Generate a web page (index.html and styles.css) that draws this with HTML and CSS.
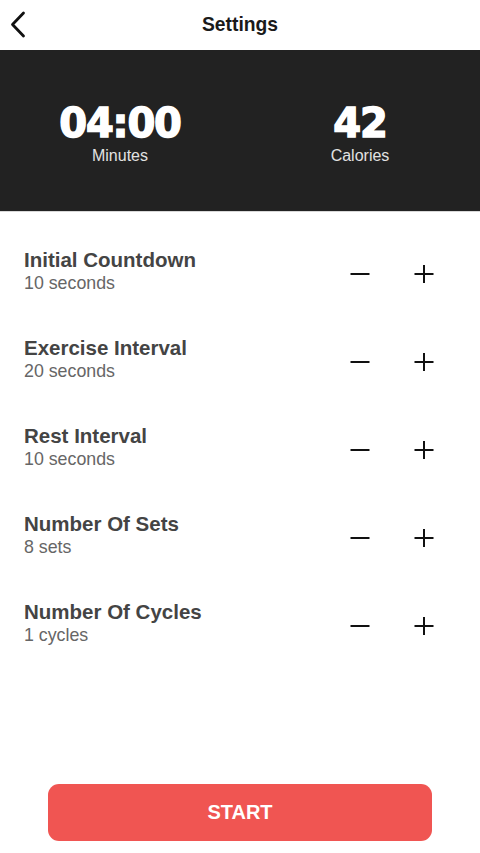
FILE: index.html
```html
<!DOCTYPE html>
<html>
<head>
<meta charset="utf-8">
<link rel="stylesheet" href="styles.css">
</head>
<body>
<div class="app">
  <header class="topbar">
    <svg class="back" width="24" height="28" viewBox="0 0 24 28"><path d="M14.5 2 L3.5 13.5 L14.5 25" fill="none" stroke="#111" stroke-width="2.8" stroke-linecap="round" stroke-linejoin="round"/></svg>
    <h1 class="title">Settings</h1>
  </header>
  <section class="summary">
    <div class="stat">
      <div class="stat-value">04:00</div>
      <div class="stat-label">Minutes</div>
    </div>
    <div class="stat">
      <div class="stat-value">42</div>
      <div class="stat-label">Calories</div>
    </div>
  </section>
  <section class="list">
    <div class="row">
      <div class="info"><div class="name">Initial Countdown</div><div class="value">10 seconds</div></div>
      <div class="controls">
        <svg class="btn" width="20" height="20" viewBox="0 0 20 20"><path d="M0.5 10 H19.5" stroke="#111" stroke-width="2"/></svg>
        <svg class="btn" width="20" height="20" viewBox="0 0 20 20"><path d="M0.5 10 H19.5 M10 1 V19" stroke="#111" stroke-width="2"/></svg>
      </div>
    </div>
    <div class="row">
      <div class="info"><div class="name">Exercise Interval</div><div class="value">20 seconds</div></div>
      <div class="controls">
        <svg class="btn" width="20" height="20" viewBox="0 0 20 20"><path d="M0.5 10 H19.5" stroke="#111" stroke-width="2"/></svg>
        <svg class="btn" width="20" height="20" viewBox="0 0 20 20"><path d="M0.5 10 H19.5 M10 1 V19" stroke="#111" stroke-width="2"/></svg>
      </div>
    </div>
    <div class="row">
      <div class="info"><div class="name">Rest Interval</div><div class="value">10 seconds</div></div>
      <div class="controls">
        <svg class="btn" width="20" height="20" viewBox="0 0 20 20"><path d="M0.5 10 H19.5" stroke="#111" stroke-width="2"/></svg>
        <svg class="btn" width="20" height="20" viewBox="0 0 20 20"><path d="M0.5 10 H19.5 M10 1 V19" stroke="#111" stroke-width="2"/></svg>
      </div>
    </div>
    <div class="row">
      <div class="info"><div class="name">Number Of Sets</div><div class="value">8 sets</div></div>
      <div class="controls">
        <svg class="btn" width="20" height="20" viewBox="0 0 20 20"><path d="M0.5 10 H19.5" stroke="#111" stroke-width="2"/></svg>
        <svg class="btn" width="20" height="20" viewBox="0 0 20 20"><path d="M0.5 10 H19.5 M10 1 V19" stroke="#111" stroke-width="2"/></svg>
      </div>
    </div>
    <div class="row">
      <div class="info"><div class="name">Number Of Cycles</div><div class="value">1 cycles</div></div>
      <div class="controls">
        <svg class="btn" width="20" height="20" viewBox="0 0 20 20"><path d="M0.5 10 H19.5" stroke="#111" stroke-width="2"/></svg>
        <svg class="btn" width="20" height="20" viewBox="0 0 20 20"><path d="M0.5 10 H19.5 M10 1 V19" stroke="#111" stroke-width="2"/></svg>
      </div>
    </div>
  </section>
  <footer class="footer">
    <button class="start">START</button>
  </footer>
</div>
</body>
</html>
```

FILE: styles.css
```css
* { box-sizing: border-box; }
html, body { margin: 0; padding: 0; background: #fff; }
body { font-family: "Liberation Sans", Arial, sans-serif; }
.app { width: 480px; height: 853px; display: flex; flex-direction: column; }
.topbar { height: 50px; display: flex; align-items: center; justify-content: center; position: relative; }
.back { position: absolute; left: 9px; top: 11px; }
.title { margin: 0; font-size: 19.3px; font-weight: bold; color: #1a1a1a; }
.summary { height: 162px; background: #222222; display: grid; grid-template-columns: 1fr 1fr; align-items: start; padding-top: 50px; border-bottom: 1px solid #d8d8d8; }
.stat { display: flex; flex-direction: column; align-items: center; }
.stat-value { font-family: "DejaVu Sans", sans-serif; font-weight: bold; font-size: 40px; line-height: 47px; color: #fff; letter-spacing: -1.2px; -webkit-text-stroke: 1.5px #fff; }
.stat-label { font-size: 16px; color: #e2e2e2; line-height: 18px; margin-top: 0; }
.list { padding: 35px 0 0 24px; display: flex; flex-direction: column; gap: 40px; }
.row { display: flex; align-items: center; height: 48px; }
.info { flex: 1; }
.name { font-size: 20.5px; font-weight: bold; color: #444; line-height: 24px; }
.value { font-size: 17.8px; color: #666; line-height: 22px; }
.controls { display: flex; gap: 44px; margin-right: 46px; margin-top: 5px; }
.footer { margin-top: auto; padding: 0 48px 12px; }
.start { width: 100%; height: 57px; border: none; border-radius: 11px; background: #f05552; color: #fff; font-family: "Liberation Sans", Arial, sans-serif; font-weight: bold; font-size: 20px; display: block; }
```
